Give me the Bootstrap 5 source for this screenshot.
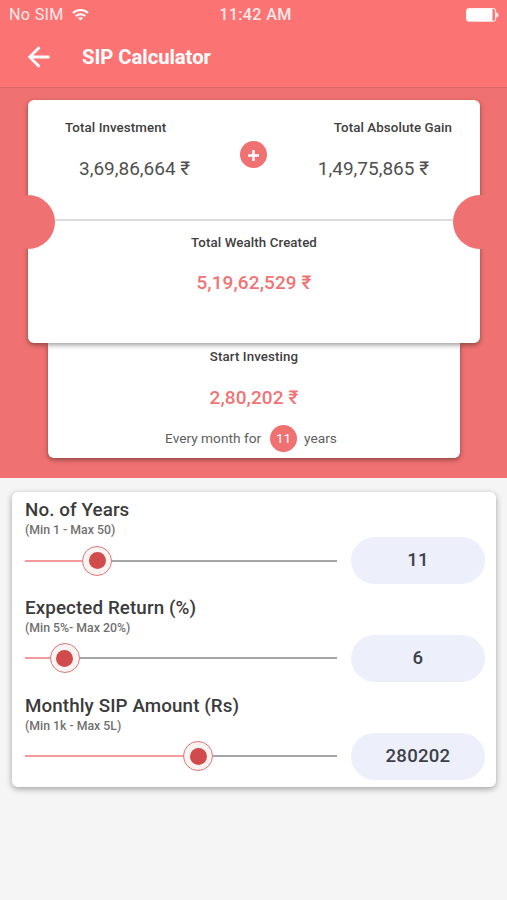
<!DOCTYPE html>
<html lang="en">
<head>
<meta charset="utf-8">
<meta name="viewport" content="width=device-width, initial-scale=1">
<title>SIP Calculator</title>
<link rel="stylesheet" href="https://cdn.jsdelivr.net/npm/bootstrap@5.3.0/dist/css/bootstrap.min.css">
<style>
body{font-family:Roboto,"Liberation Sans",sans-serif;background:#f5f5f5;color:#404040;line-height:1.2;min-height:100vh}
.app-top{background:#fb7373;height:88px;border-bottom:1px solid #dd6566;color:#fff}
.status-bar{height:30px;padding:0 8px 0 9px;font-size:16.2px;color:#ffe9e9}
.status-bar>*{flex:1 1 0}
.carrier{letter-spacing:.3px}
.clock{font-weight:500;letter-spacing:.3px;padding-left:3px}
.title-bar{height:55px;padding-left:27px}
.title-text{font-size:20.3px;font-weight:700;margin-left:31px;letter-spacing:-.05px}
.hero{background:#f07171;height:390px;padding:12px 27px 0 28px}
.summary{height:243px;border-radius:6px;background:#fff;box-shadow:0 2px 5px rgba(0,0,0,.4);z-index:1}
.summary-top{height:121px;border-bottom:2px solid #dcdcdc;padding:20px 28px 0 37px}
.notch{position:absolute;top:95px;width:54px;height:54px;border-radius:50%;background:#f07171}
.notch-start{left:-27px}
.notch-end{right:-27px}
.caption-text{font-size:13.3px;line-height:16px;font-weight:500;letter-spacing:.1px}
.figure-text{font-size:19px;line-height:22px;letter-spacing:0;color:#505050}
.caption-text+.figure-text{margin-top:22px}
.invested{padding-left:14px}
.gain{padding-right:23px}
.sum-text{font-size:19px;line-height:22px;font-weight:500;letter-spacing:.1px;color:#f07474}
.caption-text+.sum-text{margin-top:22px}
.wealth{padding-top:14px}
.wealth .sum-text{margin-top:21px}
.dot{width:27px;height:27px;border-radius:50%;background:#f07171;color:#fff}
.plus{margin:21px 1px 0 0;padding-top:2px}
.invest{height:115px;margin:0 20px;border-radius:0 0 6px 6px;background:#fff;box-shadow:0 2px 5px rgba(0,0,0,.4);padding-top:6px}
.every{font-size:13.7px;color:#606060;margin-top:16px;padding-right:6px}
.every .dot{margin:0 7px 0 9px}
.panel{margin:14px 11px 0 12px;height:295px;border-radius:6px;background:#fff;box-shadow:0 2px 6px rgba(0,0,0,.35);padding:8px 11px 0 13px}
.field{height:97.8px}
.field-name{font-size:18.8px;line-height:21px;font-weight:500;letter-spacing:.1px;color:#3b3b3b}
.field-hint{font-size:12.3px;line-height:14px;font-weight:500;margin-top:2px;color:#707070}
.control{height:47px}
.slider{width:312px;height:30px}
.line{height:2px;background:#a5a5a5}
.line-on{background:#f59a9a}
.knob{width:30px;height:30px;border-radius:50%;border:1.5px solid #dc7678;background:#faf3f1;flex:none}
.knob::before{content:"";width:17px;height:17px;border-radius:50%;background:#d14b4d}
.pill{width:134px;height:47px;border-radius:24px;background:#edf0fb;font-size:18.6px;font-weight:500;color:#3e4048;letter-spacing:.25px}
</style>
<script src="https://cdn.jsdelivr.net/npm/bootstrap@5.3.0/dist/js/bootstrap.bundle.min.js"></script>
</head>
<body>
<header class="app-top">
  <div class="status-bar d-flex align-items-center">
    <div class="d-flex align-items-center"><span class="carrier">No SIM</span>
      <svg class="ms-2" width="17" height="13" viewBox="0 0 17 13" fill="none" stroke="#fff" stroke-width="2"><path d="M1 4C5.2 0 11.8 0 16 4M3.8 7c2.7-2.5 6.7-2.5 9.4 0"/><path d="M8.5 11.6 5.9 9.1c1.5-1.3 3.7-1.3 5.2 0z" fill="#fff" stroke="none"/></svg>
    </div>
    <div class="clock text-center text-nowrap">11:42 AM</div>
    <div class="d-flex justify-content-end">
      <svg width="34" height="14" viewBox="0 0 34 14"><rect x="1.6" y=".6" width="29" height="12.6" rx="2" fill="none" stroke="#fff"/><rect x="2" y="1" width="25.5" height="12" rx="1" fill="#fff"/><path d="M31.3 4.2c2.9 1.5 2.9 4.1 0 5.6z" fill="#fff"/></svg>
    </div>
  </div>
  <div class="title-bar d-flex align-items-center">
    <svg width="24" height="24" viewBox="0 0 24 24" fill="none" stroke="#fff" stroke-width="2.8"><path d="M22.5 11H3M12.5 1.2 2.7 11l9.8 9.8"/></svg>
    <div class="title-text">SIP Calculator</div>
  </div>
</header>
<main>
  <section class="hero">
    <div class="summary position-relative">
      <div class="summary-top d-flex justify-content-between">
        <div><div class="caption-text">Total Investment</div><div class="figure-text invested text-nowrap">3,69,86,664 ₹</div></div>
        <div class="dot plus d-flex align-items-center justify-content-center"><svg width="11" height="11" viewBox="0 0 11 11" stroke="#fff" stroke-width="2.4"><path d="M5.5 0v11M0 5.5h11"/></svg></div>
        <div class="text-end"><div class="caption-text">Total Absolute Gain</div><div class="figure-text gain text-nowrap">1,49,75,865 ₹</div></div>
      </div>
      <div class="text-center wealth"><div class="caption-text">Total Wealth Created</div><div class="sum-text">5,19,62,529 ₹</div></div>
      <span class="notch notch-start"></span><span class="notch notch-end"></span>
    </div>
    <div class="invest text-center">
      <div class="caption-text">Start Investing</div>
      <div class="sum-text">2,80,202 ₹</div>
      <div class="every d-flex align-items-center justify-content-center"><span>Every month for</span><span class="dot d-flex align-items-center justify-content-center">11</span><span>years</span></div>
    </div>
  </section>
  <section class="panel">
    <div class="field">
      <div class="field-name">No. of Years</div><div class="field-hint">(Min 1 - Max 50)</div>
      <div class="control d-flex align-items-center justify-content-between">
        <div class="slider d-flex align-items-center"><div class="line line-on" style="width:57px"></div><div class="knob d-flex align-items-center justify-content-center"></div><div class="line flex-grow-1"></div></div>
        <div class="pill d-flex align-items-center justify-content-center">11</div>
      </div>
    </div>
    <div class="field">
      <div class="field-name">Expected Return (%)</div><div class="field-hint">(Min 5%- Max 20%)</div>
      <div class="control d-flex align-items-center justify-content-between">
        <div class="slider d-flex align-items-center"><div class="line line-on" style="width:24.5px"></div><div class="knob d-flex align-items-center justify-content-center"></div><div class="line flex-grow-1"></div></div>
        <div class="pill d-flex align-items-center justify-content-center">6</div>
      </div>
    </div>
    <div class="field">
      <div class="field-name">Monthly SIP Amount (Rs)</div><div class="field-hint">(Min 1k - Max 5L)</div>
      <div class="control d-flex align-items-center justify-content-between">
        <div class="slider d-flex align-items-center"><div class="line line-on" style="width:158px"></div><div class="knob d-flex align-items-center justify-content-center"></div><div class="line flex-grow-1"></div></div>
        <div class="pill d-flex align-items-center justify-content-center">280202</div>
      </div>
    </div>
  </section>
</main>
</body>
</html>
